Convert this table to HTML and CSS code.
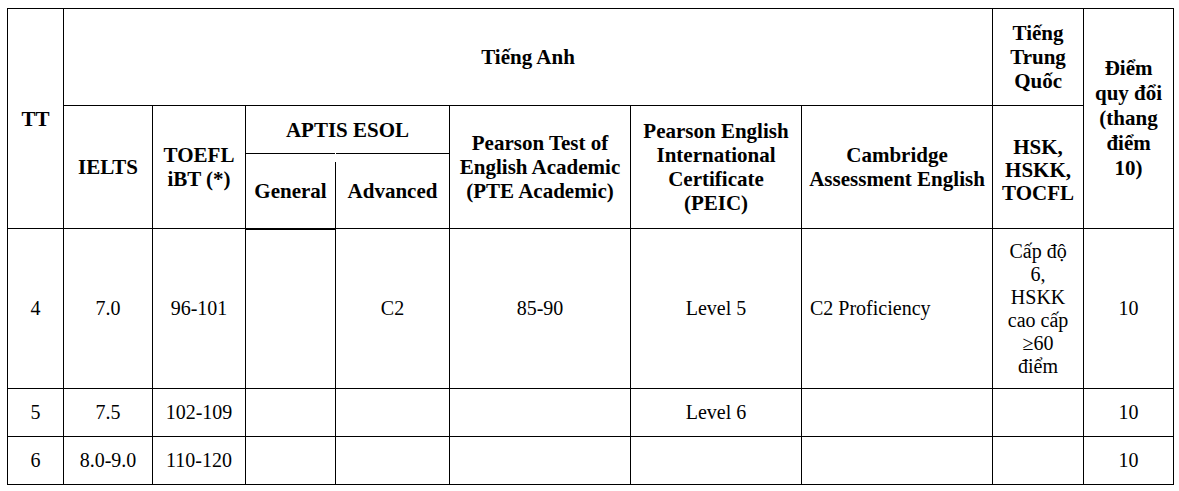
FILE: index.html
```html
<!DOCTYPE html>
<html lang="vi">
<head>
<meta charset="utf-8">
<title>Bảng quy đổi điểm ngoại ngữ</title>
<link rel="stylesheet" href="styles.css">
</head>
<body>
<table class="score-table">
  <colgroup>
    <col class="c-tt">
    <col class="c-ielts">
    <col class="c-toefl">
    <col class="c-general">
    <col class="c-advanced">
    <col class="c-pte">
    <col class="c-peic">
    <col class="c-cam">
    <col class="c-hsk">
    <col class="c-diem">
  </colgroup>
  <thead>
    <tr class="h1">
      <th rowspan="3">TT</th>
      <th colspan="7">Tiếng Anh</th>
      <th>Tiếng Trung Quốc</th>
      <th rowspan="3" class="diem">Điểm quy đổi (thang điểm 10)</th>
    </tr>
    <tr class="h2">
      <th rowspan="2">IELTS</th>
      <th rowspan="2">TOEFL iBT (*)</th>
      <th colspan="2">APTIS ESOL</th>
      <th rowspan="2">Pearson Test of English Academic (PTE Academic)</th>
      <th rowspan="2">Pearson English International Certificate (PEIC)</th>
      <th rowspan="2">Cambridge Assessment English</th>
      <th rowspan="2" class="hsk">HSK, HSKK, TOCFL</th>
    </tr>
    <tr class="h3">
      <th class="general">General</th>
      <th>Advanced</th>
    </tr>
  </thead>
  <tbody>
    <tr class="r-tall">
      <td>4</td>
      <td>7.0</td>
      <td>96-101</td>
      <td></td>
      <td>C2</td>
      <td>85-90</td>
      <td>Level 5</td>
      <td class="left">C2 Proficiency</td>
      <td>Cấp độ 6, HSKK cao cấp ≥60 điểm</td>
      <td>10</td>
    </tr>
    <tr class="r-short">
      <td>5</td>
      <td>7.5</td>
      <td>102-109</td>
      <td></td>
      <td></td>
      <td></td>
      <td>Level 6</td>
      <td class="left"></td>
      <td></td>
      <td>10</td>
    </tr>
    <tr class="r-short">
      <td>6</td>
      <td>8.0-9.0</td>
      <td>110-120</td>
      <td></td>
      <td></td>
      <td></td>
      <td></td>
      <td class="left"></td>
      <td></td>
      <td>10</td>
    </tr>
  </tbody>
</table>
</body>
</html>
```
FILE: styles.css
```css
html, body {
  background: #fff;
}
body {
  margin: 8px 0 0 7px;
  font-family: "Liberation Serif", "Times New Roman", serif;
  color: #000;
}
.score-table {
  border-collapse: collapse;
  table-layout: fixed;
  width: 1166px;
}
.c-tt { width: 56px; }
.c-ielts { width: 89px; }
.c-toefl { width: 93px; }
.c-general { width: 90px; }
.c-advanced { width: 114px; }
.c-pte { width: 181px; }
.c-peic { width: 171px; }
.c-cam { width: 191px; }
.c-hsk { width: 91px; }
.c-diem { width: 90px; }

.score-table th,
.score-table td {
  border: 1px solid #000;
  text-align: center;
  vertical-align: middle;
}
.score-table th {
  font-size: 21px;
  font-weight: bold;
  line-height: 24px;
  padding: 0 6px;
}
.score-table th.diem {
  padding: 0 8px;
  line-height: 25px;
}
.score-table th.hsk {
  line-height: 23px;
  padding-top: 6px;
}
.score-table td {
  font-size: 20px;
  font-weight: normal;
  line-height: 23px;
  padding: 0 8px;
}
.score-table td.left {
  text-align: left;
}
.score-table th.general {
  position: relative;
  border-bottom: 2px solid #000;
}
.score-table th.general::after {
  content: "";
  position: absolute;
  top: -1px;
  right: -1px;
  width: 1px;
  height: 9px;
  background: #fff;
}
.h1 { height: 97px; }
.h2 { height: 48px; }
.h3 { height: 75px; }
.r-tall { height: 160px; }
.r-short { height: 48px; }
```
